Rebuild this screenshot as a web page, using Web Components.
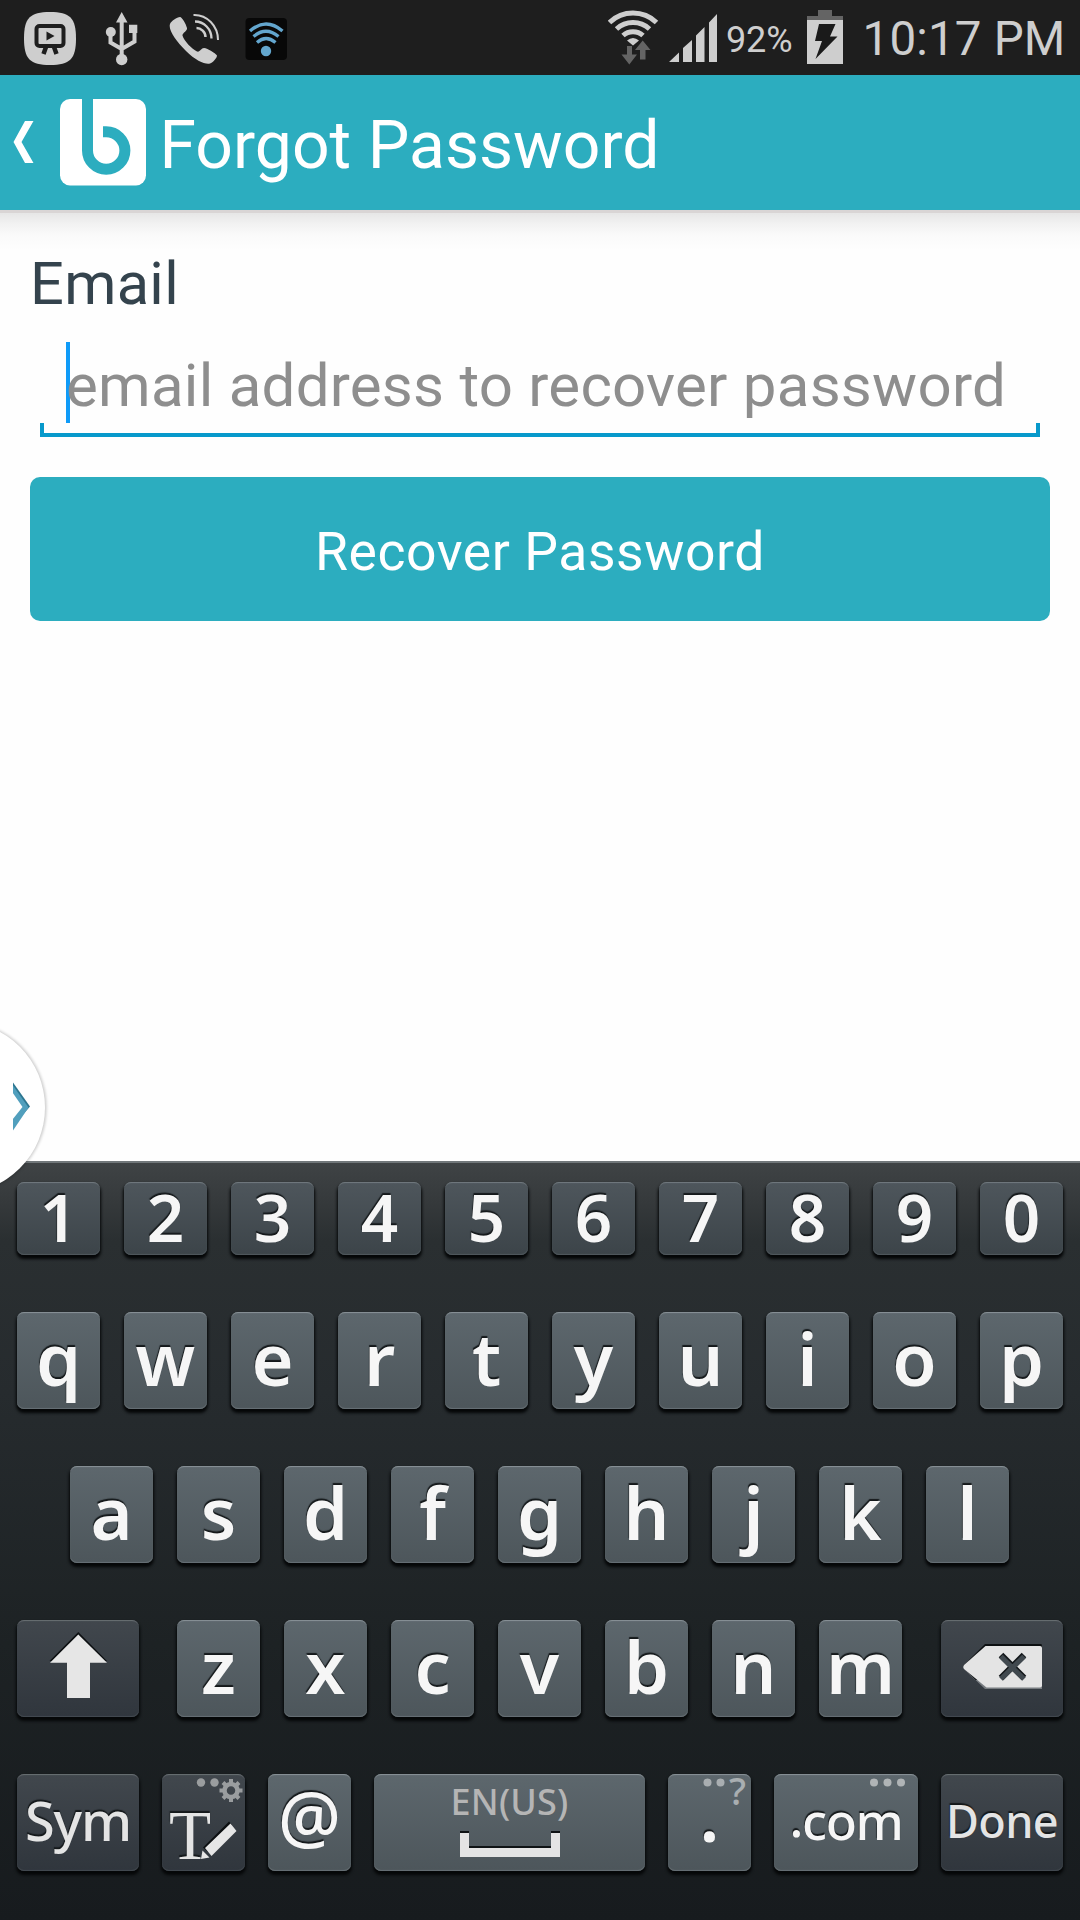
<!DOCTYPE html>
<html lang="en">
<head>
<meta charset="utf-8">
<title>Forgot Password</title>
<style>
  html, body { margin: 0; padding: 0; background: #fefefe; }
  body { width: 1080px; height: 1920px; overflow: hidden; font-family: Roboto, "Liberation Sans", sans-serif; }
</style>
</head>
<body>
<phone-screen></phone-screen>
<script>
const define = (name, html, setup) => {
  const tpl = document.createElement('template');
  tpl.innerHTML = html.trim();
  customElements.define(name, class extends HTMLElement {
    constructor() {
      super();
      this.attachShadow({ mode: 'open' }).append(tpl.content.cloneNode(true));
    }
    connectedCallback() { if (setup) setup(this, this.shadowRoot); }
  });
};

/* A single line of text tracked out to a given advance width. */
define('fit-text', `<style>:host { display: flex; flex: none; } span { display: block; flex: none; white-space: pre; }</style><span><slot></slot></span>`, (el, root) => {
  const span = root.querySelector('span');
  const want = +el.getAttribute('w');
  const n = el.textContent.length;
  if (!n) return;
  el.style.width = want + 'px';
  span.style.letterSpacing = '0px';
  span.style.letterSpacing = (want - span.getBoundingClientRect().width) / n + 'px';
});

define('status-bar', `
  <style>
    :host { display: flex; height: 75px; background: #1e1e1e; color: #cecece; padding-left: 24px; box-sizing: border-box; }
    svg { display: block; height: 75px; flex: none; }
    .pct { font-size: 36px; line-height: 80px; margin-left: 9px; }
    .time { font-size: 47.5px; line-height: 79px; margin-left: 19.5px; }
  </style>
  <svg width="53" viewBox="24 0 53 75">
    <path fill="#cecece" d="M50 12C70 12 76 18 76 38.500S70 65 50 65 24 59 24 38.500 30 12 50 12Z"/>
    <rect x="36.500" y="26" width="27" height="20" rx="3" fill="none" stroke="#1e1e1e" stroke-width="4"/>
    <path fill="#1e1e1e" d="M46.500 31.500 54.500 36 46.500 40.500Z"/>
    <path stroke="#1e1e1e" stroke-width="4.500" d="M46 47 43.500 54M54 47 56.500 54"/>
  </svg>
  <svg width="33" viewBox="105 0 33 75" style="margin-left:28px">
    <g fill="none" stroke="#cecece" stroke-width="4"><path d="M121.700 20V56M110.500 33V42.500L121.700 49M134.500 30V41.500L121.700 49"/></g>
    <path fill="#cecece" d="M121.700 12 127.500 22.500H116ZM129 24.700H137.300V33H129Z"/>
    <circle cx="110.800" cy="32" r="5" fill="#cecece"/><circle cx="121.700" cy="59.500" r="5.700" fill="#cecece"/>
  </svg>
  <svg width="51" viewBox="169 0 51 75" style="margin-left:31px">
    <path fill="#cecece" d="M170 24C171 21 177 17 180 17 182 17 186 24 187 28 187.500 31 182 33 182.500 35.500 184 41 192 49 197 51.500 200 52.500 201 48 204 48 208 48.500 215 53 217 55.500 217 58 213 62.500 210 63.500 206 65 196 61 186 51 176 41 168 30 170 24Z"/>
    <g fill="none" stroke="#cecece"><path stroke-width="2" d="M193.500 15C207 14.500 218 26 218 40"/><path stroke-width="2.300" d="M195 21.500C204 21.500 211.500 29 211.500 38.500"/><path stroke-width="2.500" d="M196.500 28C201 28 205.500 32 205.500 37"/></g>
  </svg>
  <svg width="43" viewBox="245 0 43 75" style="margin-left:25px">
    <rect x="245.500" y="18" width="41.500" height="42" rx="4" fill="#080808"/>
    <g fill="none" stroke="#63a6ce" stroke-width="3.300"><path d="M250 31Q266 17 282.500 31"/><path d="M253.500 36.500Q266 26 278.500 36.500"/><path d="M257 42.500Q266 34.500 275.500 42.500"/></g>
    <circle cx="266" cy="51" r="5.200" fill="#63a6ce"/>
  </svg>
  <svg width="51" viewBox="608 0 51 75" style="margin-left:320px">
    <g fill="none" stroke="#cecece" stroke-width="5"><path d="M609.500 22.500A34 34 0 0 1 656.500 22.500"/><path d="M616.500 29A24.500 24.500 0 0 1 649.500 29"/><path d="M623 35.500A15 15 0 0 1 643 35.500"/></g>
    <path fill="#cecece" d="M627 40.500Q633 35.500 639 40.500L633 45.500Z"/>
    <path fill="#646464" d="M627 46H632V54.500H637L629.300 64.500 621.500 54.500H627ZM640 59.500V50H635L642.700 40.500 650.500 50H645.500V59.500Z"/>
  </svg>
  <svg width="48" viewBox="669 0 48 75" style="margin-left:10px">
    <path fill="#cecece" d="M669 62 679 52.500V62ZM683 62V48L692 40V62ZM696 62V35.500L704.500 27V62ZM709 62V22.500L717 14V62Z"/>
  </svg>
  <fit-text class="pct" w="66.500">92%</fit-text>
  <svg width="36" viewBox="807 0 36 75" style="margin-left:14.500px">
    <path fill="#646464" d="M818 10H832V16H843V20H807V16H818Z"/><path fill="#cecece" d="M807 20H843V64H807Z"/>
    <path fill="#1a1a1a" d="M819 24H835.500L830 36.500H837.500L815.500 59 822 41H815Z"/>
  </svg>
  <fit-text class="time" w="203">10:17 PM</fit-text>`);

define('action-bar', `
  <style>
    :host { display: flex; height: 135px; background: #2cadbf; color: #fff; }
    svg { display: block; flex: none; }
    fit-text { font-size: 66px; line-height: 141px; margin-left: 12.500px; }
  </style>
  <svg width="147" height="135" viewBox="0 75 147 135">
    <path fill="#fff" d="M25 121H33.500L21.500 142 33.500 163H25L13.500 142Z"/>
    <rect x="60" y="99" width="86" height="86.500" rx="10" fill="#fff"/>
    <path fill="none" stroke="#2cadbf" stroke-width="11" d="M87.500 98.500V150.500A18.700 18.700 0 1 0 106.200 131.800H103"/>
  </svg>
  <fit-text w="500">Forgot Password</fit-text>`);

define('recover-form', `
  <style>
    :host { display: flex; flex-direction: column; height: 951px; box-sizing: border-box; padding: 0 30px;
      background: linear-gradient(#d9d5d5 0 3px, #e6e6e6 3px, #f2f2f2 14px, #fafafa 25px, #fefefe 40px); }
    .label { color: #34434d; font-size: 59.500px; line-height: 80px; margin-top: 33.500px; height: 80px; }
    .field { display: flex; flex: none; height: 95px; width: 1000px; margin: 18.500px 0 0 10px; background:
      linear-gradient(#0799cb, #0799cb) 0 100% / 100% 4px no-repeat,
      linear-gradient(#0799cb, #0799cb) 0 100% / 4px 14px no-repeat,
      linear-gradient(#0799cb, #0799cb) 100% 100% / 4px 14px no-repeat; }
    .caret { width: 4px; height: 81px; margin-left: 26px; background: #0f9bf8; }
    .hint { color: #8e8e8e; font-size: 60px; line-height: 87px; margin-left: -4px; }
    .button { display: flex; flex: none; justify-content: center; height: 144px; margin-top: 40px; border-radius: 10px;
      background: #2cadbf; color: #fff; font-size: 53.500px; line-height: 149px; }
  </style>
  <fit-text class="label" w="149">Email</fit-text>
  <div class="field"><div class="caret"></div><fit-text class="hint" w="940">email address to recover password</fit-text></div>
  <div class="button" role="button"><fit-text w="450">Recover Password</fit-text></div>`);

/* Keyboard key: "dark" for function keys, "num" for the short digit row. */
define('key-cap', `
  <style>
    :host { display: flex; justify-content: center; flex: none; position: relative; box-sizing: border-box; width: 83px; height: 97px; border-radius: 7px;
      background: linear-gradient(#5d676d, #4d565b); color: #f6f6f6;
      box-shadow: inset 0 2px 1px -1px #8a9398, inset 0 -1px 1px #687176, 0 3px 3px 1px #050708;
      font: 600 72px/93px "Noto Sans", sans-serif; text-shadow: -0.500px -2px 1px #14181a; }
    :host([num]) { height: 73px; font-size: 65.500px; line-height: 70px; background: linear-gradient(#4e565c, #3c4449);
      box-shadow: inset 0 2px 1px -1px #737b80, inset 0 -1px 1px #50595e, 0 3px 3px 1px #050708; }
    :host([dark]) { background: linear-gradient(#41474d, #30363d); color: #e4e4e4; font-weight: 500;
      box-shadow: inset 0 2px 1px -1px #6a7074, inset 0 -1px 1px #444b51, 0 3px 3px 1px #050708; }
    ::slotted(svg) { display: block; flex: none; }
  </style>
  <slot></slot>`);

define('soft-keyboard', `
  <style>
    :host { display: flex; flex-direction: column; height: 759px; box-sizing: border-box; padding: 19px 17px 0; border-top: 2px solid #71777a;
      background: linear-gradient(#3f4345, #35393b 40px, #2a2f31 78px, #262b2e 230px, #1d2224 480px, #171b1e 758px); }
    .row { display: flex; gap: 24px; margin-bottom: 57px; }
    .mid { padding-left: 53px; }
    .bottom { gap: 23px; }
    .z { margin-left: 14px; } .m { margin-right: 15px; }
    .lang { display: flex; flex-direction: column; align-items: center; }
    .lang fit-text { font-size: 36px; line-height: 56px; color: #b5b5b5; text-shadow: none; font-weight: 500; }
    .q { position: absolute; right: 5px; top: 0; font-size: 38px; line-height: 32px; font-weight: 500; color: #a9aeb1; text-shadow: none; }
    .dots { position: absolute; top: 0; left: 0; }
    .point { position: relative; top: -3px; }
    .T { font-family: "Liberation Serif", serif; font-size: 69px; line-height: 124px; font-weight: 400; position: absolute; left: 7px; top: 0; }
    svg { display: block; }
  </style>
  <div class="row" id="r1"></div>
  <div class="row" id="r2"></div>
  <div class="row mid" id="r3"></div>
  <div class="row" id="r4">
    <key-cap dark style="width:122px"><svg width="122" height="97" viewBox="17 1620 122 97">
      <path fill="#0d1012" d="M78.300 1632 107 1661H49.500Z"/>
      <path fill="#e6e6e6" d="M78.300 1634.500 107 1662.700H90V1698H67V1662.700H50Z"/></svg></key-cap>
    <key-cap dark style="width:122px"><svg width="122" height="97" viewBox="941 1620 122 97">
      <path fill="#0d1012" d="M985 1644H1041Q1042 1644 1042 1646V1680H975L963 1666Z"/>
      <path fill="#777c80" d="M963 1668 985 1689H1042V1680H975Z"/>
      <path fill="#e4e4e4" d="M985.500 1646H1040Q1042 1646 1042 1648V1685.500Q1042 1687.500 1040 1687.500H986.500L964 1669Q962.500 1667 964 1665Z"/>
      <path stroke="#14181b" stroke-width="6.500" d="M1001 1655 1024 1678M1024 1655 1001 1678"/>
      <path stroke="#41494f" stroke-width="5" d="M1001 1656.500 1024 1679M1024 1656.500 1001 1679"/></svg></key-cap>
  </div>
  <div class="row bottom">
    <key-cap dark style="width:122px;font-size:54px;line-height:93px"><fit-text w="106">Sym</fit-text></key-cap>
    <key-cap dark><span class="T">T</span><svg width="83" height="97" viewBox="162 1774 83 97">
      <g fill="#9a9d9f"><circle cx="201" cy="1782.500" r="4.200"/><circle cx="214.500" cy="1782.500" r="4.200"/></g>
      <circle cx="231" cy="1790.500" r="6.500" fill="none" stroke="#9a9d9f" stroke-width="4.500"/>
      <path stroke="#9a9d9f" stroke-width="4" d="M231 1779V1784M231 1797V1802M219.500 1790.500H225M237 1790.500H242.500M223 1782.500 226.500 1786M235.500 1795 239 1798.500M239 1782.500 235.500 1786M226.500 1795 223 1798.500"/>
      <path fill="#0d1012" d="M203 1847.500 229 1821.500 232 1825 208 1852Z"/>
      <path fill="#e6e6e6" d="M205 1848 230.500 1823.500 236.500 1831 211.500 1856ZM202.500 1850.500 209.500 1857.500 201 1859Z"/></svg></key-cap>
    <key-cap style="font-size:70px;line-height:84px;font-weight:500">@</key-cap>
    <key-cap style="width:271px"><div class="lang"><fit-text w="118">EN(US)</fit-text>
      <svg width="100" height="27" viewBox="460 1830 100 27"><path fill="#0f1315" d="M460 1831H469V1846H551V1831H560V1850H460Z"/><path fill="#e4e4e4" d="M460 1833H469V1848H551V1833H560V1857H460Z"/></svg></div></key-cap>
    <key-cap style="line-height:81px">.<span class="q">?</span><svg class="dots" width="83" height="20" viewBox="668 1774 83 20"><g fill="#a9aeb1"><circle cx="707.500" cy="1782.500" r="4"/><circle cx="720.500" cy="1782.500" r="4"/></g></svg></key-cap>
    <key-cap style="width:144px;font-size:51px;line-height:93px;font-weight:500"><fit-text w="113"><span class="point">.</span>com</fit-text><svg class="dots" width="144" height="20" viewBox="774 1774 144 20"><g fill="#b0b4b6"><circle cx="874" cy="1782.500" r="4"/><circle cx="887.500" cy="1782.500" r="4"/><circle cx="901" cy="1782.500" r="4"/></g></svg></key-cap>
    <key-cap dark style="width:122px;font-size:45px;line-height:94px"><fit-text w="112">Done</fit-text></key-cap>
  </div>`, (el, root) => {
  const keys = (chars, num) => [...chars].map(c => {
    const k = document.createElement('key-cap');
    if (num) k.setAttribute('num', '');
    k.textContent = c;
    if (c === 'z' || c === 'm') k.className = c;
    return k;
  });
  root.querySelector('#r1').append(...keys('1234567890', true));
  root.querySelector('#r2').append(...keys('qwertyuiop'));
  root.querySelector('#r3').append(...keys('asdfghjkl'));
  root.querySelector('#r4').firstElementChild.after(...keys('zxcvbnm'));
});

/* Half-hidden drawer handle that floats over the form and the keyboard. */
define('edge-handle', `
  <style>:host { display: block; position: absolute; left: 0; top: 1015px; } svg { display: block; overflow: hidden; }</style>
  <svg width="60" height="185" viewBox="0 1015 60 185">
    <defs><filter id="s" x="-20%" y="-20%" width="140%" height="140%"><feGaussianBlur stdDeviation="1.600"/></filter></defs>
    <circle cx="-40" cy="1107.500" r="86.500" fill="#000" opacity=".2" filter="url(#s)"/>
    <circle cx="-41" cy="1107.500" r="86" fill="#fff"/>
    <path fill="#2d7690" d="M13 1082.500 30 1106.500 13 1126Z"/>
    <path fill="#519fbd" d="M13 1085.500 28.500 1107.500 13 1130.500Z"/>
    <path fill="#fff" d="M12.500 1092.500 22.500 1107 12.500 1119.500Z"/>
  </svg>`);

define('phone-screen', `
  <style>:host { display: flex; flex-direction: column; position: relative; width: 1080px; height: 1920px; overflow: hidden; }</style>
  <status-bar></status-bar>
  <action-bar></action-bar>
  <recover-form></recover-form>
  <soft-keyboard></soft-keyboard>
  <edge-handle></edge-handle>`);
</script>
</body>
</html>
